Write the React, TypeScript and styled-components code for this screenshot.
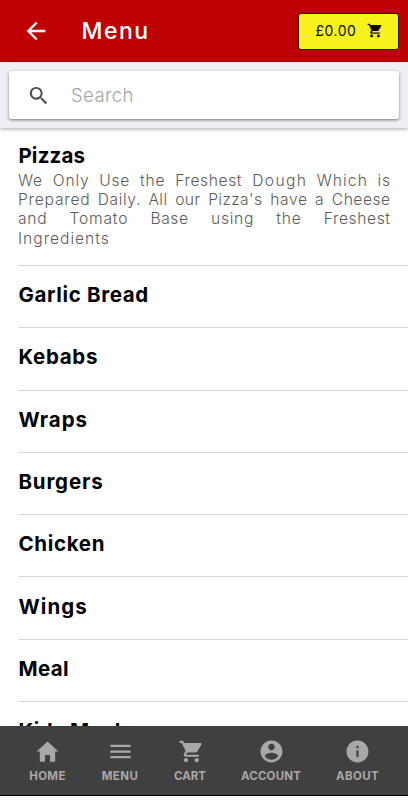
import React from 'react';
import styled, { createGlobalStyle } from 'styled-components';
import type { IconType } from 'react-icons';
import {
  IoMdArrowBack,
  IoMdCart,
  IoMdContact,
  IoMdHome,
  IoMdInformationCircle,
  IoMdMenu,
  IoMdSearch,
} from 'react-icons/io';

const GlobalStyle = createGlobalStyle`
  * { box-sizing: border-box; }
  html, body { margin: 0; padding: 0; overflow: hidden; }
  body { font-family: Inter, "Open Sans", sans-serif; background: #fff; color: #000; }
`;

const Screen = styled.div`
  display: flex;
  flex-direction: column;
  width: 408px;
  height: 800px;
  overflow: hidden;
  background: #fafafa;
`;

const Header = styled.header`
  display: flex;
  align-items: center;
  flex: none;
  height: 62px;
  padding: 0 9px 0 22px;
  background: #bf0000;
  color: #fff;
`;

const BackButton = styled.button`
  display: flex;
  margin: 0;
  padding: 0;
  border: 0;
  background: none;
  color: inherit;
  font-size: 28px;
`;

const Title = styled.h1`
  flex: 1;
  margin: 0 0 0 31.5px;
  font-size: 23px;
  font-weight: 500;
  letter-spacing: 1.5px;
  line-height: 30px;
`;

const CartButton = styled.button`
  display: flex;
  align-items: center;
  justify-content: space-between;
  width: 101px;
  height: 37px;
  padding: 0 15px 2px 16.5px;
  border: 1.5px solid #2a1a05;
  border-radius: 3px;
  background: #f7f21e;
  color: #0c0c05;
  font: 400 14px Inter, sans-serif;
  letter-spacing: 0.5px;

  svg { font-size: 17px; }
`;

const SearchBar = styled.div`
  flex: none;
  height: 66px;
  padding: 9px 9px 0;
  background: #efeef3;
  box-shadow: 0 1px 4px rgba(0, 0, 0, 0.35);
  z-index: 1;
`;

const SearchField = styled.label`
  display: flex;
  align-items: center;
  height: 48px;
  padding-left: 18px;
  border-radius: 2px;
  background: #fff;
  box-shadow: 0 1px 3px rgba(0, 0, 0, 0.55);
  color: #4c4c4c;

  svg { font-size: 23px; }
`;

const SearchInput = styled.input`
  flex: 1;
  min-width: 0;
  margin-left: 21px;
  padding: 0 0 1px;
  border: 0;
  outline: 0;
  background: none;
  font: 300 18.5px Inter, sans-serif;
  letter-spacing: 0.4px;

  &::placeholder { color: #a5a5a5; opacity: 1; }
`;

const List = styled.main`
  flex: 1;
  min-height: 0;
  overflow: hidden;
  padding-left: 18px;
  background: #fff;
`;

const Category = styled.section<{ $tall?: boolean }>`
  height: ${(p) => (p.$tall ? '138px' : '62.3px')};
  padding: ${(p) => (p.$tall ? '15px' : '16.2px')} 18px 0 0;
  border-bottom: 1px solid #d8d8d8;
`;

const CategoryName = styled.h2<{ $track: number }>`
  margin: 0 0 0 0.4px;
  font-size: 20.5px;
  font-weight: 700;
  line-height: 26px;
  letter-spacing: ${(p) => p.$track}px;
`;

const Description = styled.p`
  margin: 2px 0 0;
  color: #5c5c5c;
  font-size: 15.6px;
  font-weight: 300;
  line-height: 19.2px;
`;

const Line = styled.span<{ $last?: boolean }>`
  display: block;
  white-space: nowrap;
  text-align: ${(p) => (p.$last ? 'left' : 'justify')};
  text-align-last: ${(p) => (p.$last ? 'left' : 'justify')};
`;

const Word = styled.span<{ $track: number }>`
  letter-spacing: ${(p) => p.$track}px;
  margin-right: ${(p) => -p.$track}px;
`;

const TabBar = styled.nav`
  display: grid;
  grid-template-columns: 95px 50px 90px 72px 101px;
  flex: none;
  height: 70px;
  margin-bottom: 4px;
  border-bottom: 1.5px solid #000;
  background: #404040;
`;

const Tab = styled.a<{ $track: number }>`
  display: flex;
  flex-direction: column;
  align-items: center;
  padding-top: 12px;
  color: #aaa7a7;
  font-size: 11.5px;
  font-weight: 700;
  line-height: 14px;
  letter-spacing: ${(p) => p.$track}px;

  svg { font-size: 27px; margin-bottom: 4px; }
`;

type Spaced = [string, number];

const description: Spaced[][] = [
  [['We', 0.8], ['Only', 0.8], ['Use', 0.8], ['the', 0.8], ['Freshest', 0.6], ['Dough', 1.4], ['Which', 1.1], ['is', 0.8]],
  [['Prepared', 0.8], ['Daily.', 0.6], ['All', 0.4], ['our', 0.4], ["Pizza's", 0.4], ['have', 0.6], ['a', 0], ['Cheese', 0.5]],
  [['and', 0.7], ['Tomato', 0.8], ['Base', 0.6], ['using', 0.7], ['the', 0.8], ['Freshest', 0.6]],
  [['Ingredients', 1]],
];

const categories: Spaced[] = [
  ['Garlic Bread', 0.65],
  ['Kebabs', 0.7],
  ['Wraps', 0.9],
  ['Burgers', 0.85],
  ['Chicken', 0.7],
  ['Wings', 1.1],
  ['Meal', 0.4],
  ['Kids Meal', 0.4],
];

const tabs: { label: string; icon: IconType; track: number }[] = [
  { label: 'HOME', icon: IoMdHome, track: 0.3 },
  { label: 'MENU', icon: IoMdMenu, track: 0.4 },
  { label: 'CART', icon: IoMdCart, track: 0 },
  { label: 'ACCOUNT', icon: IoMdContact, track: 0.2 },
  { label: 'ABOUT', icon: IoMdInformationCircle, track: 0.4 },
];

export default function App() {
  return (
    <Screen>
      <GlobalStyle />
      <Header>
        <BackButton aria-label="Back"><IoMdArrowBack /></BackButton>
        <Title>Menu</Title>
        <CartButton>£0.00<IoMdCart /></CartButton>
      </Header>
      <SearchBar>
        <SearchField>
          <IoMdSearch />
          <SearchInput placeholder="Search" />
        </SearchField>
      </SearchBar>
      <List>
        <Category $tall>
          <CategoryName $track={0.2}>Pizzas</CategoryName>
          <Description>
            {description.map((line, i) => (
              <Line key={i} $last={i === description.length - 1}>
                {line.map(([text, track], j) => (
                  <React.Fragment key={j}>
                    {j > 0 && ' '}
                    <Word $track={track}>{text}</Word>
                  </React.Fragment>
                ))}
              </Line>
            ))}
          </Description>
        </Category>
        {categories.map(([name, track]) => (
          <Category key={name}>
            <CategoryName $track={track}>{name}</CategoryName>
          </Category>
        ))}
      </List>
      <TabBar>
        {tabs.map(({ label, icon: Icon, track }) => (
          <Tab key={label} $track={track}><Icon />{label}</Tab>
        ))}
      </TabBar>
    </Screen>
  );
}
